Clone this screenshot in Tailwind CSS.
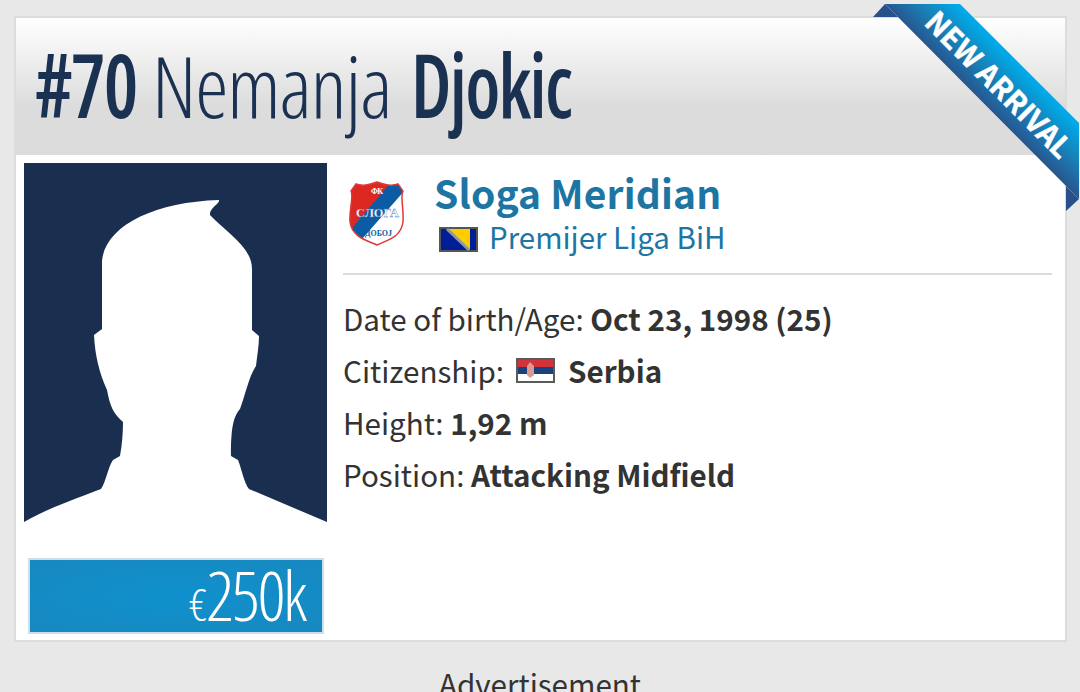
<!DOCTYPE html>
<html lang="en">
<head>
  <meta charset="UTF-8" />
  <meta name="viewport" content="width=device-width, initial-scale=1.0" />
  <title>Nemanja Djokic - Player profile</title>
  <script src="https://cdn.jsdelivr.net/npm/@tailwindcss/browser@4"></script>
</head>
<body class="bg-[#e8e8e8] h-[692px] overflow-hidden font-['Noto_Sans_CJK_SC',sans-serif] text-[#333]">

  <!-- Player card -->
  <main class="relative mt-4 ml-[14px] w-[1053px] h-[626px] bg-white border-2 border-[#dcdcdc]">

    <!-- Header -->
    <h1 class="flex items-baseline h-[137px] pl-[19px] bg-linear-to-b from-white to-[#dcdcdc] to-65% text-[#1a3151] font-['Open_Sans',sans-serif] font-stretch-75% leading-[133px] whitespace-nowrap">
      <span class="w-[117px] text-[88px] font-semibold tracking-[-2px] origin-left scale-x-[.88]">#70</span>
      <span class="w-[259px] text-[84px] font-[330] tracking-[-1.1px]">Nemanja</span>
      <span class="text-[88px] font-semibold tracking-[-2px] origin-left scale-x-[.86]">Djokic</span>
    </h1>

    <div class="flex pt-2 pl-2">
      <!-- Photo and market value -->
      <div class="w-[303px]">
        <svg class="block w-[303px] h-[360px]" viewBox="0 0 303 360">
          <rect width="303" height="360" fill="#1a2f50" />
          <path fill="#fff" d="M0 360V359C24 345 54 335 77 326C82 319 84 304 89 297L96 293C98 282 99 270 99 259C89 250 86 243 83 227C75 209 71 192 70 172L78 166V98C81 63 130 39 195 37C196 41 185 45 186 52C203 70 228 84 228 106V167L235 173C235 183 233 193 232 203C225 213 221 233 216 246C209 254 207 266 207 293L214 297C218 307 220 320 225 326L303 359V360Z" />
        </svg>
        <div class="flex items-baseline justify-end mt-[35px] ml-1 w-[296px] h-[76px] pr-[17px] border-2 border-[#ccdfe9] bg-radial from-[#0f91cd] to-[#1788bf] text-white font-['Open_Sans',sans-serif] font-[350] font-stretch-75% leading-[68px]">
          <span class="text-[45px] tracking-[-1px]">€</span><span class="text-[69px] tracking-[-2.4px]">250k</span>
        </div>
      </div>

      <!-- Club and details -->
      <div class="ml-4 w-[709px]">
        <div class="flex h-[112px] border-b-2 border-[#dcdcdc]">
          <svg class="mt-[17px] ml-[6px] w-[56px] h-[68px]" viewBox="0 0 56 68">
            <defs>
              <clipPath id="shield"><path d="M7 4Q15 7 28 2Q41 7 49 4L54 11C51 17 55 28 54 42C52 57 39 60 28 65C17 60 3 57 1 42C0 28 5 17 2 11Z" /></clipPath>
            </defs>
            <g clip-path="url(#shield)">
              <rect width="56" height="68" fill="#fff" />
              <path d="M0 0H45L0 52Z" fill="#dc2820" />
              <path d="M44 0L56 10L13 59L2 49Z" fill="#0b5ba5" />
            </g>
            <path d="M7 4Q15 7 28 2Q41 7 49 4L54 11C51 17 55 28 54 42C52 57 39 60 28 65C17 60 3 57 1 42C0 28 5 17 2 11Z" fill="none" stroke="#dc3a3a" stroke-width="1.5" />
            <g font-family="Liberation Serif, serif" font-weight="bold">
              <text x="22" y="14" font-size="8" fill="#fff" textLength="12">ФК</text>
              <text x="7" y="37" font-size="13" fill="#fff" textLength="43" lengthAdjust="spacingAndGlyphs" stroke="#3970ae" stroke-width=".3">СЛОГА</text>
              <text x="16" y="56" font-size="8" fill="#0b5ba5" textLength="27" lengthAdjust="spacingAndGlyphs">ДОБОЈ</text>
            </g>
          </svg>
          <div class="ml-[29px] text-[#1d75a3] whitespace-nowrap">
            <h2 class="mt-[5px] h-[48px] leading-[48px] text-[39px] font-bold tracking-[.15px]">Sloga Meridian</h2>
            <div class="flex items-center mt-[2px] pl-[5px] h-9 text-[29.5px] leading-9">
              <svg class="mt-[6px] w-[39px] h-[25px] mr-[11px]" viewBox="0 0 39 25">
                <rect x="1" y="1" width="37" height="23" fill="#001f96" stroke="#555" stroke-width="2" />
                <path d="M9 2H31V23Z" fill="#fc0" />
                <path d="M8 2L30 23" stroke="#8f9a98" stroke-width="3" />
              </svg>
              <span>Premijer Liga BiH</span>
            </div>
          </div>
        </div>

        <div class="flex flex-col pt-[18px] text-[29.6px] leading-[52px] whitespace-nowrap">
          <p>Date of birth/Age: <strong>Oct 23, 1998 (25)</strong></p>
          <p class="flex items-center">Citizenship:
            <svg class="ml-[12px] mr-[13px] mb-[2px] w-[39px] h-[25px]" viewBox="0 0 39 25">
              <rect width="39" height="9" fill="#d33338" />
              <rect y="9" width="39" height="7" fill="#17417f" />
              <rect y="16" width="39" height="9" fill="#fff" />
              <path d="M11 8L14 4L18 8V17L14 20L11 17Z" fill="#dc9990" />
              <rect x="1" y="1" width="37" height="23" fill="none" stroke="#5b5b5b" stroke-width="2" />
            </svg>
            <strong>Serbia</strong>
          </p>
          <p>Height: <strong>1,92 m</strong></p>
          <p>Position: <strong>Attacking Midfield</strong></p>
        </div>
      </div>
    </div>

    <!-- Corner ribbon -->
    <svg class="absolute top-[-14px] right-[-15px] w-[208px] h-[208px]" viewBox="0 0 208 208">
      <defs>
        <linearGradient id="ribbon" gradientUnits="userSpaceOnUse" x1="72" y1="62" x2="109" y2="25">
          <stop offset="0" stop-color="#29538b" />
          <stop offset=".5" stop-color="#1880b7" />
          <stop offset="1" stop-color="#00a9e8" />
        </linearGradient>
      </defs>
      <path d="M13 0L1 13H26ZM194 182L207 195L194 207Z" fill="#28508a" />
      <path d="M13 0H88L207 119V195Z" fill="url(#ribbon)" />
      <text transform="translate(51 20) rotate(45)" font-family="Noto Sans CJK SC, sans-serif" font-weight="bold" font-size="29" fill="#fff" stroke="#fff" stroke-width=".5" textLength="193">NEW ARRIVAL</text>
    </svg>
  </main>

  <p class="mt-[24px] text-center text-[29.6px] leading-9">Advertisement</p>

</body>
</html>
